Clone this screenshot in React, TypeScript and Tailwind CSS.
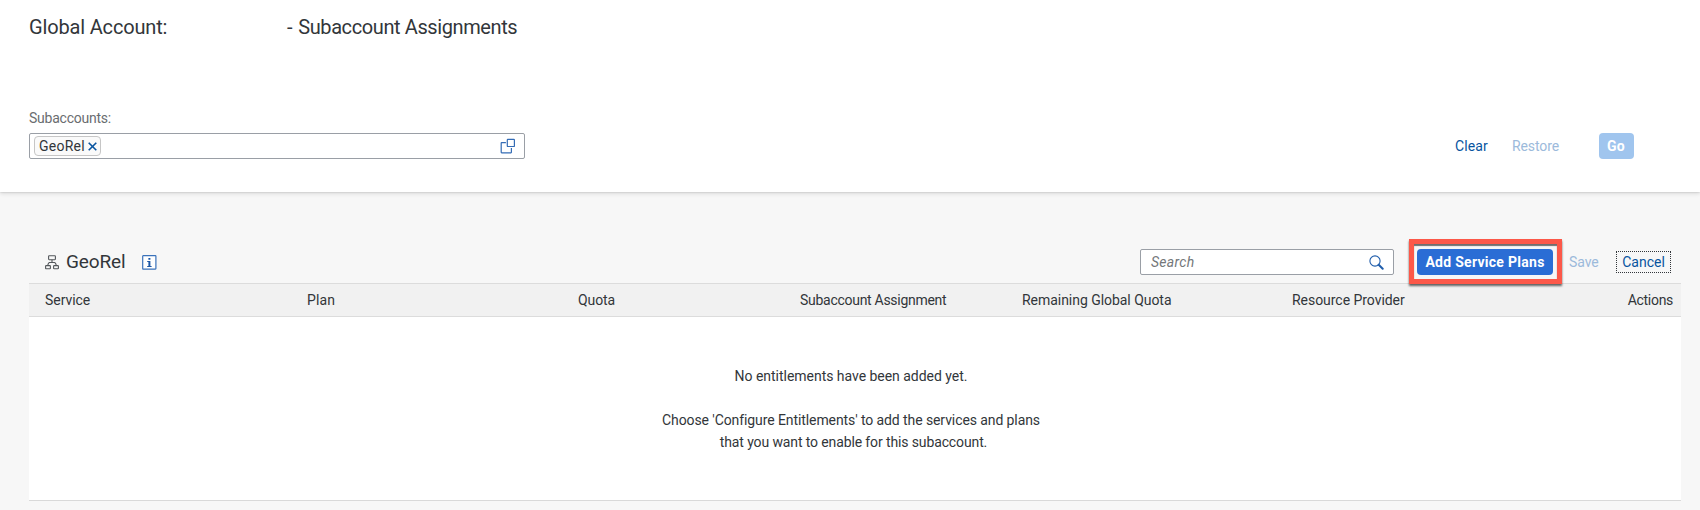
import React from 'react';

const ValueHelpIcon = () => (
  <svg width="16" height="16" viewBox="0 0 16 16" fill="none" stroke="#346cb5" strokeWidth="1.2">
    <rect x="7.3" y="1.4" width="7.1" height="7.1" rx="0.6" />
    <path d="M5.9 4.6H1.7a.5.5 0 0 0-.5.5v9.2a.5.5 0 0 0 .5.5h9.2a.5.5 0 0 0 .5-.5v-4.2" />
  </svg>
);

const OrgIcon = () => (
  <svg width="14" height="15" viewBox="0 0 14 15" fill="none" stroke="#53575b" strokeWidth="1.1">
    <rect x="3.6" y="0.8" width="6.8" height="3.9" rx="0.6" />
    <path d="M7 4.7v2.6M3 10.6V9.2L4.2 7.5h5.6L11 9.2v1.4" />
    <rect x="0.6" y="10.6" width="4.8" height="3.2" rx="0.6" />
    <rect x="8.6" y="10.6" width="4.8" height="3.2" rx="0.6" />
  </svg>
);

const InfoIcon = () => (
  <svg width="15" height="15" viewBox="0 0 15 15" fill="none">
    <rect x="0.7" y="0.7" width="13.2" height="13.4" rx="0.5" fill="#fff" stroke="#3a72ba" strokeWidth="1.2" />
    <path d="M6.4 3h2v1.8h-2zM5.2 6h3.2v5h1.2v1.1H5.2V11h1.2V7.1H5.2z" fill="#1c57a5" />
  </svg>
);

const SearchIcon = () => (
  <svg width="15" height="15" viewBox="0 0 15 15" fill="none" stroke="#1f5dab">
    <circle cx="6" cy="6" r="5.1" strokeWidth="1.1" />
    <path d="M9.7 9.7l4 4" strokeWidth="2" strokeLinecap="round" />
  </svg>
);

const columns = [
  { name: 'Service', tracking: 'tracking-[-0.05px]' },
  { name: 'Plan', tracking: 'tracking-[0.1px]' },
  { name: 'Quota', tracking: 'tracking-[-0.1px]' },
  { name: 'Subaccount Assignment', tracking: 'tracking-[-0.28px]' },
  { name: 'Remaining Global Quota', tracking: 'tracking-[-0.04px]' },
  { name: 'Resource Provider', tracking: 'tracking-[-0.04px]' },
];

export default function App() {
  return (
    <div className="flex h-[510px] w-[1700px] flex-col overflow-hidden bg-[#f7f7f7] font-['Roboto','Liberation_Sans',sans-serif] text-[14px] leading-[22px] text-[#32363a]">
      <header className="h-[192px] shrink-0 bg-white pl-[29px] shadow-[0_0_2px_rgba(0,0,0,0.2),0_2px_4px_rgba(0,0,0,0.1)]">
        <h1 className="flex pt-[15px] text-[20px] leading-6">
          <span className="w-[258px] tracking-[-0.16px]">Global Account:</span>
          <span className="tracking-[-0.4px]"><span className="mr-[1.5px]">-</span> Subaccount Assignments</span>
        </h1>
        <label className="mt-[68px] block tracking-[-0.24px] text-[#6a6d70]">Subaccounts:</label>
        <div className="mt-1 flex h-[26px] items-center">
          <div className="flex h-[26px] w-[496px] items-center justify-between rounded-[2px] border border-[#9a9fa6] bg-white pr-2 pl-1">
            <div className="flex h-5 w-[67px] items-center justify-between rounded-[4px] border border-[#c6c6c6] bg-[#fafafa] pr-[3px] pl-1">
              <span className="tracking-[0.25px]">GeoRel</span>
              <svg width="9" height="9" viewBox="0 0 9 9" stroke="#0854a0" strokeWidth="1.6">
                <path d="M.7.7l7.6 7.6M8.3.7L.7 8.3" />
              </svg>
            </div>
            <ValueHelpIcon />
          </div>
          <button className="ml-[930px] w-[57px] text-left tracking-[0.1px] text-[#0854a0]">Clear</button>
          <button className="w-[86.5px] text-left tracking-[-0.1px] text-[#9cbadb]">Restore</button>
          <button className="h-[26px] w-[35px] rounded-[4px] bg-[#a0c5ee] font-bold tracking-[0.3px] text-white">Go</button>
        </div>
      </header>

      <main className="flex flex-col pt-[47px] pr-[19px] pl-[29px]">
        <div className="flex h-11 items-start pl-4">
          <div className="flex h-11 items-center pt-[2px]">
            <OrgIcon />
            <h2 className="ml-[7px] w-[76px] text-[19px] leading-6 tracking-[-0.15px]">GeoRel</h2>
            <InfoIcon />
          </div>
          <div className="ml-auto flex h-[46px] items-center">
            <div className="flex h-[26px] w-[254px] items-center justify-between rounded-[2px] border border-[#9a9fa6] bg-white pr-[9px] pl-[10px]">
              <span className="tracking-[0.3px] text-[#74777a] italic">Search</span>
              <SearchIcon />
            </div>
            <div className="relative z-10 mb-px ml-[15px] flex h-[45px] w-[153px] items-center border-[5px] border-[#fc5849] pt-px pl-[3px] shadow-[0_2px_2px_rgba(0,0,0,0.6),inset_0_2px_1px_rgba(0,0,0,0.55)]">
              <button className="h-[26px] w-[136px] rounded-[4px] bg-[#2a6dd5] font-bold tracking-[0.28px] whitespace-nowrap text-white">Add Service Plans</button>
            </div>
            <button className="ml-[7px] w-[47px] text-left tracking-[-0.1px] text-[#9cbadb]">Save</button>
            <button className="mr-[10px] h-[22px] w-[55px] border border-dotted border-[#32363a] leading-5 text-[#0854a0]">Cancel</button>
          </div>
        </div>

        <div className="grid h-[34px] grid-cols-[262px_271px_222px_222px_270px_1fr_auto] items-center border-y border-[#dcdcdc] bg-[#f1f1f1] pr-2 pl-4">
          {columns.map((c) => (
            <span key={c.name} className={c.tracking}>{c.name}</span>
          ))}
          <span className="tracking-[-0.3px]">Actions</span>
        </div>

        <div className="h-[184px] border-b border-[#d9d9d9] bg-white pt-12 pr-1 text-center">
          <p className="pr-1 tracking-[-0.03px]">No entitlements have been added yet.</p>
          <p className="mt-[22px] pr-1 tracking-[-0.09px]">
            Choose 'Configure Entitlements' to add the services and plans
          </p>
          <p className="pl-px tracking-[-0.12px]">that you want to enable for this subaccount.</p>
        </div>
      </main>
    </div>
  );
}
